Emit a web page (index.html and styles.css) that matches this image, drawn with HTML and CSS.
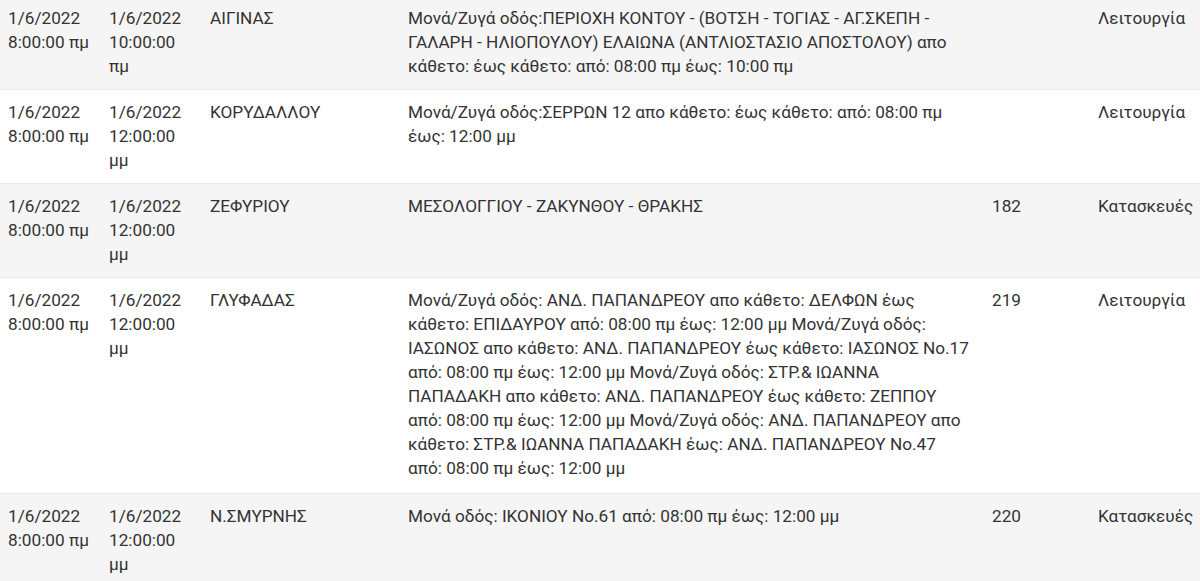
FILE: index.html
```html
<!DOCTYPE html>
<html lang="el">
<head>
<meta charset="utf-8">
<title>Διακοπές</title>
<link rel="stylesheet" href="styles.css">
</head>
<body>
<table class="outages">
  <colgroup>
    <col class="c-start">
    <col class="c-end">
    <col class="c-area">
    <col class="c-addr">
    <col class="c-num">
    <col class="c-type">
  </colgroup>
  <tbody>
    <tr class="odd">
      <td>1/6/2022 8:00:00 πμ</td>
      <td>1/6/2022 10:00:00 πμ</td>
      <td>ΑΙΓΙΝΑΣ</td>
      <td class="addr">Μονά/Ζυγά οδός:ΠΕΡΙΟΧΗ ΚΟΝΤΟΥ - (ΒΟΤΣΗ - ΤΟΓΙΑΣ - ΑΓ.ΣΚΕΠΗ - ΓΑΛΑΡΗ - ΗΛΙΟΠΟΥΛΟΥ) ΕΛΑΙΩΝΑ (ΑΝΤΛΙΟΣΤΑΣΙΟ ΑΠΟΣΤΟΛΟΥ) απο κάθετο: έως κάθετο: από: 08:00 πμ έως: 10:00 πμ</td>
      <td></td>
      <td class="type">Λειτουργία</td>
    </tr>
    <tr class="even">
      <td>1/6/2022 8:00:00 πμ</td>
      <td>1/6/2022 12:00:00 μμ</td>
      <td>ΚΟΡΥΔΑΛΛΟΥ</td>
      <td class="addr">Μονά/Ζυγά οδός:ΣΕΡΡΩΝ 12 απο κάθετο: έως κάθετο: από: 08:00 πμ έως: 12:00 μμ</td>
      <td></td>
      <td class="type">Λειτουργία</td>
    </tr>
    <tr class="odd">
      <td>1/6/2022 8:00:00 πμ</td>
      <td>1/6/2022 12:00:00 μμ</td>
      <td>ΖΕΦΥΡΙΟΥ</td>
      <td class="addr">ΜΕΣΟΛΟΓΓΙΟΥ - ΖΑΚΥΝΘΟΥ - ΘΡΑΚΗΣ</td>
      <td>182</td>
      <td class="type">Κατασκευές</td>
    </tr>
    <tr class="even tall">
      <td>1/6/2022 8:00:00 πμ</td>
      <td>1/6/2022 12:00:00 μμ</td>
      <td>ΓΛΥΦΑΔΑΣ</td>
      <td class="addr">Μονά/Ζυγά οδός: ΑΝΔ. ΠΑΠΑΝΔΡΕΟΥ απο κάθετο: ΔΕΛΦΩΝ έως κάθετο: ΕΠΙΔΑΥΡΟΥ από: 08:00 πμ έως: 12:00 μμ Μονά/Ζυγά οδός: ΙΑΣΩΝΟΣ απο κάθετο: ΑΝΔ. ΠΑΠΑΝΔΡΕΟΥ έως κάθετο: ΙΑΣΩΝΟΣ No.17 από: 08:00 πμ έως: 12:00 μμ Μονά/Ζυγά οδός: ΣΤΡ.&amp; ΙΩΑΝΝΑ ΠΑΠΑΔΑΚΗ απο κάθετο: ΑΝΔ. ΠΑΠΑΝΔΡΕΟΥ έως κάθετο: ΖΕΠΠΟΥ από: 08:00 πμ έως: 12:00 μμ Μονά/Ζυγά οδός: ΑΝΔ. ΠΑΠΑΝΔΡΕΟΥ απο κάθετο: ΣΤΡ.&amp; ΙΩΑΝΝΑ ΠΑΠΑΔΑΚΗ έως: ΑΝΔ. ΠΑΠΑΝΔΡΕΟΥ No.47 από: 08:00 πμ έως: 12:00 μμ</td>
      <td>219</td>
      <td class="type">Λειτουργία</td>
    </tr>
    <tr class="odd">
      <td>1/6/2022 8:00:00 πμ</td>
      <td>1/6/2022 12:00:00 μμ</td>
      <td>Ν.ΣΜΥΡΝΗΣ</td>
      <td class="addr">Μονά οδός: ΙΚΟΝΙΟΥ No.61 από: 08:00 πμ έως: 12:00 μμ</td>
      <td>220</td>
      <td class="type">Κατασκευές</td>
    </tr>
  </tbody>
</table>
</body>
</html>
```

FILE: styles.css
```css
html, body {
  margin: 0;
  padding: 0;
  background: #ffffff;
  overflow: hidden;
}

body {
  font-family: Roboto, "Noto Sans", "Liberation Sans", sans-serif;
  font-size: 17.2px;
  line-height: 24px;
  color: #333333;
}

.outages {
  border-collapse: collapse;
  table-layout: fixed;
  width: 1240px;
  margin-top: -4px;
}

.c-start { width: 101px; }
.c-end { width: 101px; }
.c-area { width: 198px; }
.c-addr { width: 584px; }
.c-num { width: 106px; }
.c-type { width: 150px; }

.outages td {
  padding: 10px 8px 11px;
  vertical-align: top;
  text-align: left;
  border-bottom: 1px solid #e9e9e9;
}

.outages td.addr {
  padding-right: 12px;
}

.outages tr.odd td {
  background: #f5f5f5;
}

.outages tr.even td {
  background: #ffffff;
}

.outages tr.tall td {
  padding-bottom: 13px;
}

.type {
  white-space: nowrap;
}
```
